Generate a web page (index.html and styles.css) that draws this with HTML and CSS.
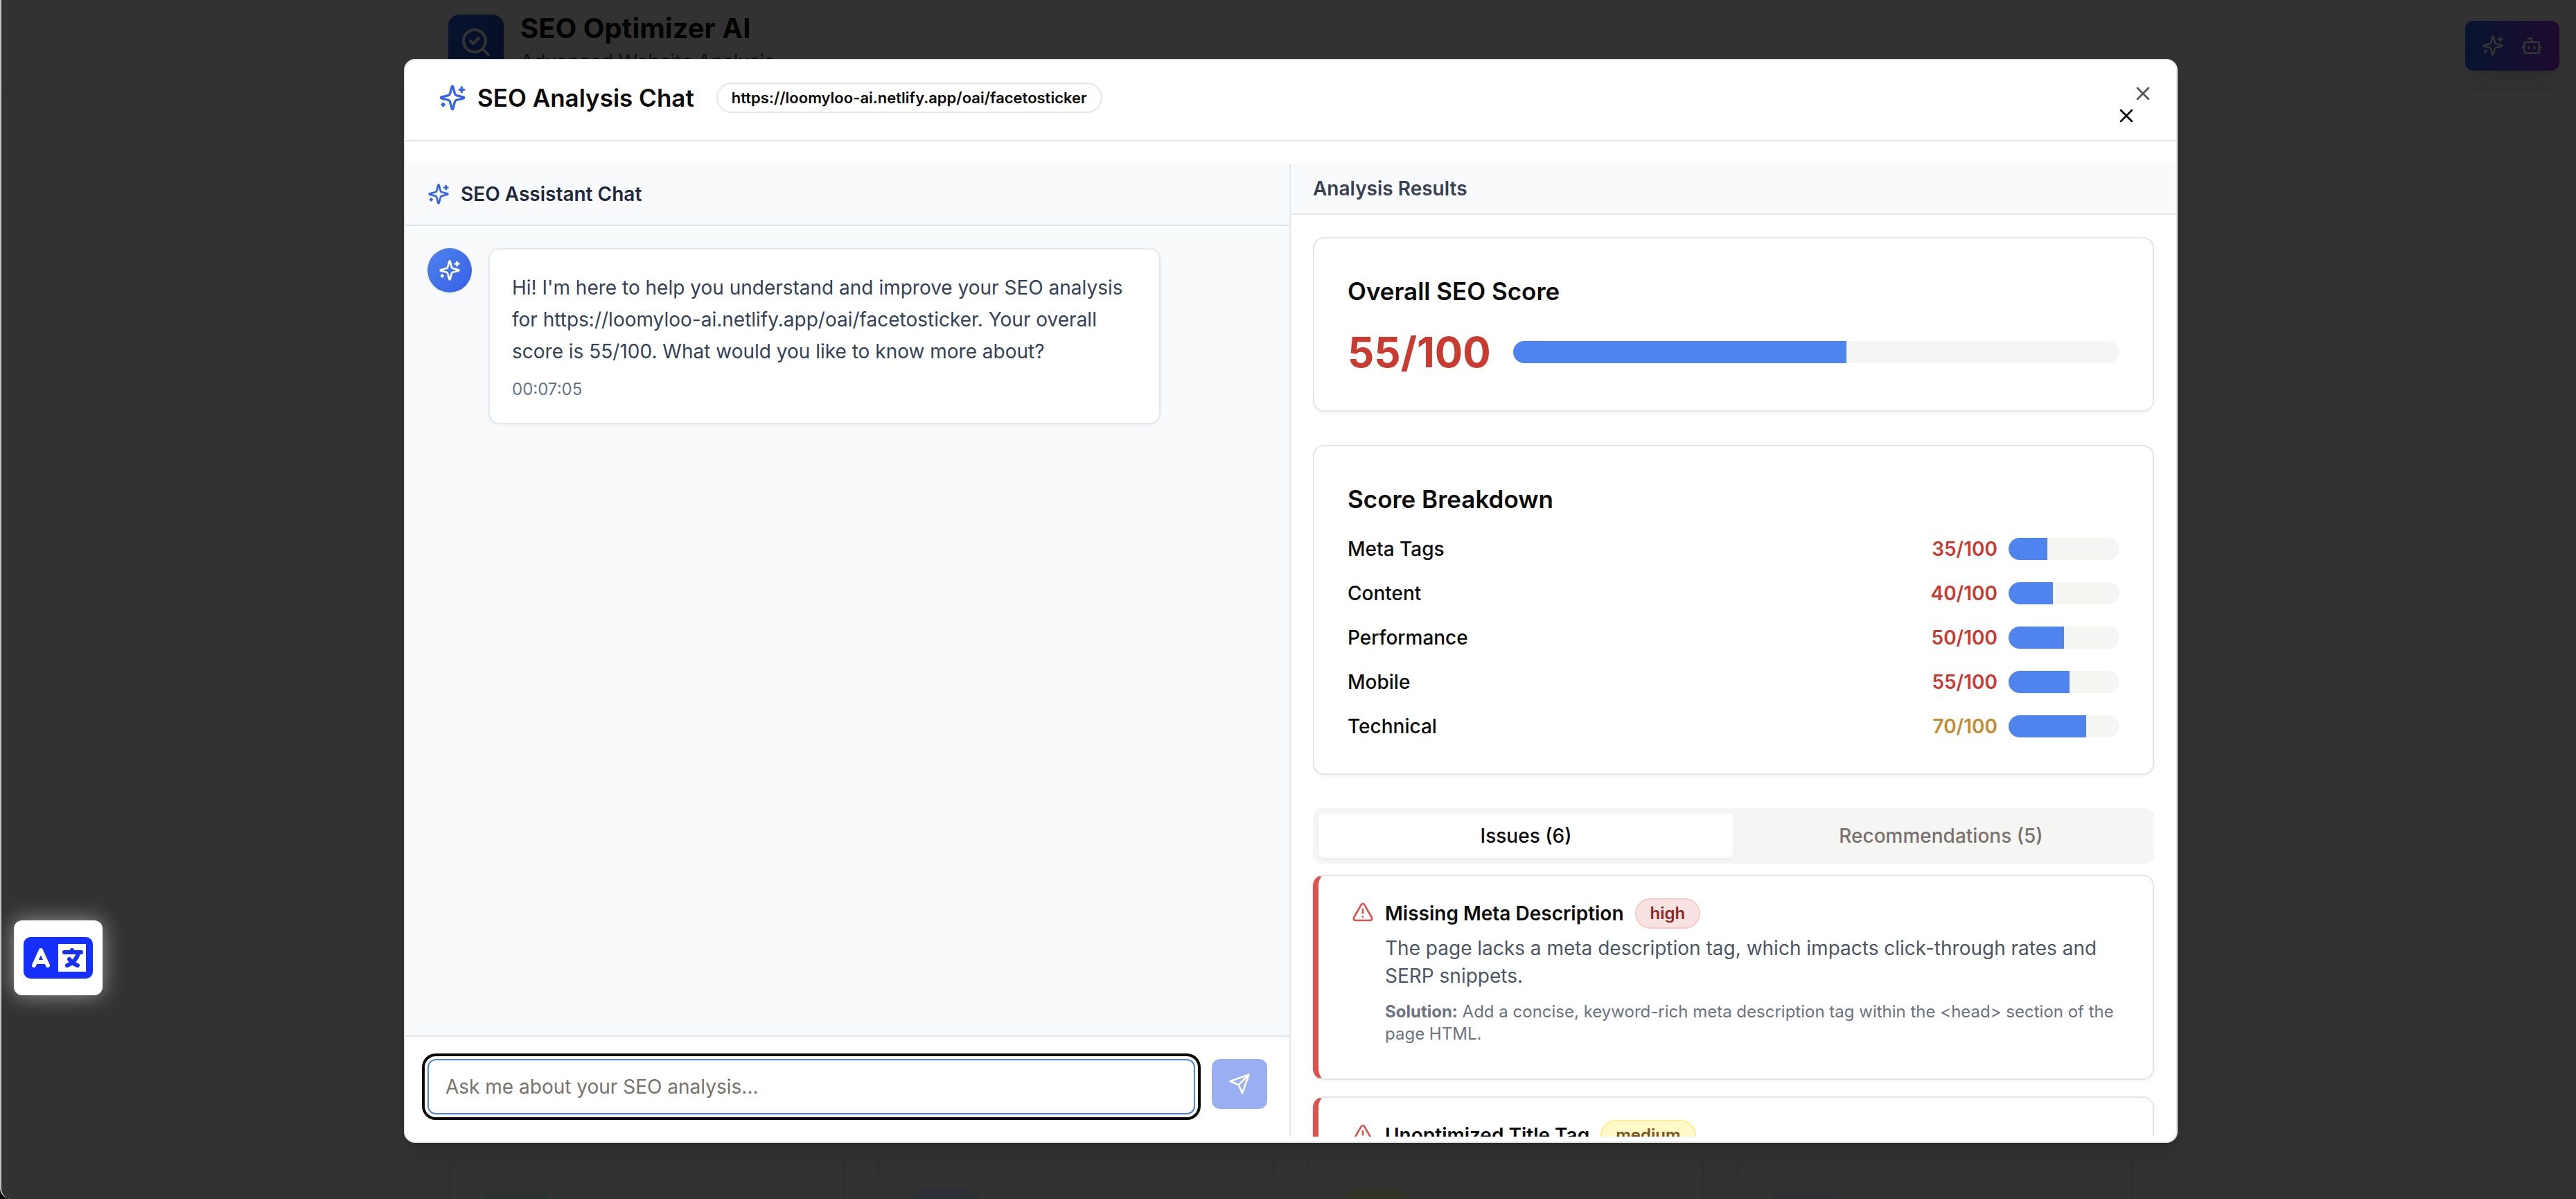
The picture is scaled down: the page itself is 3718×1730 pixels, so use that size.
FILE: index.html
```html
<!DOCTYPE html>
<html lang="en">
<head>
<meta charset="utf-8">
<title>SEO Optimizer AI</title>
<link rel="stylesheet" href="styles.css">
</head>
<body>
<svg class="symbols" aria-hidden="true">
  <symbol id="sparkles" viewBox="0 0 24 24">
    <path d="M9.937 15.5A2 2 0 0 0 8.5 14.063l-6.135-1.582a.5.5 0 0 1 0-.962L8.5 9.936A2 2 0 0 0 9.937 8.5l1.582-6.135a.5.5 0 0 1 .963 0L14.063 8.5A2 2 0 0 0 15.5 9.937l6.135 1.581a.5.5 0 0 1 0 .964L15.5 14.063a2 2 0 0 0-1.437 1.437l-1.582 6.135a.5.5 0 0 1-.963 0z"/>
    <path d="M20 3v4M22 5h-4M4 17v2M5 18H3"/>
  </symbol>
  <symbol id="bot" viewBox="0 0 24 24">
    <path d="M12 8V4H8M2 14h2M20 14h2M15 13v2M9 13v2"/>
    <rect width="16" height="12" x="4" y="8" rx="2"/>
  </symbol>
  <symbol id="search-check" viewBox="0 0 24 24">
    <path d="m8 11 2 2 4-4"/><circle cx="11" cy="11" r="8"/><path d="m21 21-4.3-4.3"/>
  </symbol>
  <symbol id="close" viewBox="0 0 24 24"><path d="M18 6 6 18M6 6l12 12"/></symbol>
  <symbol id="send" viewBox="0 0 24 24"><path d="m22 2-7 20-4-9-9-4Z"/><path d="M22 2 11 13"/></symbol>
  <symbol id="alert" viewBox="0 0 24 24">
    <path d="m21.73 18-8-14a2 2 0 0 0-3.48 0l-8 14A2 2 0 0 0 4 21h16a2 2 0 0 0 1.73-3Z"/><path d="M12 9v4M12 17h.01"/>
  </symbol>
</svg>

<div class="window">
  <div class="page">
    <header class="site-header">
      <div class="container brand">
        <span class="logo"><svg class="icon icon-lg"><use href="#search-check"/></svg></span>
        <div>
          <h1 class="brand-name">SEO Optimizer AI</h1>
          <p class="brand-tagline">Advanced Website Analysis</p>
        </div>
      </div>
    </header>
    <button class="assistant-button" type="button" aria-label="Open assistant">
      <svg class="icon"><use href="#sparkles"/></svg>
      <svg class="icon"><use href="#bot"/></svg>
    </button>
    <div class="feature-section">
      <div class="container features">
        <div class="feature"><span class="feature-icon green"></span></div>
        <div class="feature"><span class="feature-icon blue"></span></div>
        <div class="feature"><span class="feature-icon yellow"></span></div>
        <div class="feature"><span class="feature-icon purple"></span></div>
      </div>
    </div>
  </div>

  <div class="overlay">
    <div class="dialog" role="dialog" aria-labelledby="dialog-title">
      <header class="dialog-header">
        <h2 class="dialog-title" id="dialog-title"><svg class="icon icon-md accent"><use href="#sparkles"/></svg>SEO Analysis Chat</h2>
        <span class="badge url">https://loomyloo-ai.netlify.app/oai/facetosticker</span>
        <button class="header-close" type="button" aria-label="Close chat"><svg class="icon"><use href="#close"/></svg></button>
      </header>
      <button class="dialog-close" type="button" aria-label="Close"><svg class="icon"><use href="#close"/></svg></button>

      <div class="panes">
        <section class="chat">
          <h3 class="chat-header"><svg class="icon accent"><use href="#sparkles"/></svg>SEO Assistant Chat</h3>
          <div class="messages">
            <span class="avatar"><svg class="icon"><use href="#sparkles"/></svg></span>
            <div class="bubble">
              <p class="message">Hi! I'm here to help you understand and improve your SEO analysis for https://loomyloo-ai.netlify.app/oai/facetosticker. Your overall score is 55/100. What would you like to know more about?</p>
              <time class="time">00:07:05</time>
            </div>
          </div>
          <form class="composer">
            <input class="composer-input" type="text" aria-label="Message" placeholder="Ask me about your SEO analysis...">
            <button class="send" type="button" aria-label="Send"><svg class="icon"><use href="#send"/></svg></button>
          </form>
        </section>

        <section class="results">
          <h3 class="results-header">Analysis Results</h3>
          <div class="results-body">
            <div class="card">
              <h4 class="card-title">Overall SEO Score</h4>
              <div class="overall">
                <span class="overall-score">55/100</span>
                <div class="bar"><div class="bar-fill" style="width:55%"></div></div>
              </div>
            </div>

            <div class="card">
              <h4 class="card-title">Score Breakdown</h4>
              <ul class="breakdown">
                <li class="metric"><span class="metric-name">Meta Tags</span><span class="metric-score">35/100</span><div class="bar small"><div class="bar-fill" style="width:35%"></div></div></li>
                <li class="metric"><span class="metric-name">Content</span><span class="metric-score">40/100</span><div class="bar small"><div class="bar-fill" style="width:40%"></div></div></li>
                <li class="metric"><span class="metric-name">Performance</span><span class="metric-score">50/100</span><div class="bar small"><div class="bar-fill" style="width:50%"></div></div></li>
                <li class="metric"><span class="metric-name">Mobile</span><span class="metric-score">55/100</span><div class="bar small"><div class="bar-fill" style="width:55%"></div></div></li>
                <li class="metric"><span class="metric-name">Technical</span><span class="metric-score fair">70/100</span><div class="bar small"><div class="bar-fill" style="width:70%"></div></div></li>
              </ul>
            </div>

            <div>
              <div class="tabs" role="tablist">
                <button class="tab active" type="button" role="tab" aria-selected="true">Issues (6)</button>
                <button class="tab" type="button" role="tab" aria-selected="false">Recommendations (5)</button>
              </div>
              <div class="issues">
                <article class="issue">
                  <svg class="icon issue-icon"><use href="#alert"/></svg>
                  <div>
                    <div class="issue-heading"><h5 class="issue-title">Missing Meta Description</h5><span class="badge high">high</span></div>
                    <p class="issue-text">The page lacks a meta description tag, which impacts click-through rates and SERP snippets.</p>
                    <p class="issue-solution"><strong>Solution:</strong> Add a concise, keyword-rich meta description tag within the &lt;head&gt; section of the page HTML.</p>
                  </div>
                </article>
                <article class="issue">
                  <svg class="icon issue-icon"><use href="#alert"/></svg>
                  <div>
                    <div class="issue-heading"><h5 class="issue-title">Unoptimized Title Tag</h5><span class="badge medium">medium</span></div>
                  </div>
                </article>
              </div>
            </div>
          </div>
        </section>
      </div>
    </div>
  </div>

  <button class="translate" type="button" aria-label="Translate">
    <svg width="100" height="60" viewBox="0 0 100 60">
      <rect width="100" height="60" rx="10" fill="#1430fa"/>
      <rect x="50" y="10" width="40" height="40" fill="#fff"/>
      <g fill="none" stroke-width="6" stroke-linecap="round" stroke-linejoin="round">
        <path stroke="#fff" d="M15 41 25 19 35 41M19 36H31"/>
        <path stroke="#1430fa" d="M59 22H83M70 19V21M79 24Q75 36 63 41M66 32Q70 38 78 41"/>
      </g>
    </svg>
  </button>
</div>
</body>
</html>
```
FILE: styles.css
```css
*, *::before, *::after { box-sizing: border-box; }

body {
  margin: 0;
  background: #0a0a0a;
  color: #0c0a09;
  font: 400 28px/40px Inter, "Liberation Sans", sans-serif;
}

h1, h2, h3, h4, h5, p, ul { margin: 0; padding: 0; }
ul { list-style: none; }
button, input { font: inherit; color: inherit; }
button { border: 0; padding: 0; background: none; cursor: pointer; }

.symbols { position: absolute; width: 0; height: 0; }

.icon {
  flex: none;
  display: block;
  width: 32px;
  height: 32px;
  fill: none;
  stroke: currentColor;
  stroke-width: 2;
  stroke-linecap: round;
  stroke-linejoin: round;
}
.icon-md { width: 40px; height: 40px; }
.icon-lg { width: 48px; height: 48px; }
.accent { color: #3563e9; }

.window {
  position: relative;
  height: 100vh;
  overflow: hidden;
  border-left: 2px solid #c6c6c6;
  border-bottom-left-radius: 16px;
}

/* Page behind the dialog */
.page {
  height: 100%;
  display: flex;
  flex-direction: column;
  justify-content: space-between;
  background: #fafafa;
}
.container {
  width: 100%;
  max-width: 2432px;
  margin: 0 auto;
}
.site-header {
  padding: 13px 0 17px 6px;
  border-bottom: 2px solid #e7e5e4;
}
.brand { display: flex; align-items: center; gap: 24px; }
.logo {
  display: grid;
  place-items: center;
  width: 80px;
  height: 80px;
  border-radius: 16px;
  background: linear-gradient(135deg, #2563eb, #1e40af);
  color: #fff;
}
.brand-name { font-size: 40px; line-height: 56px; font-weight: 700; }
.brand-tagline { color: #57534e; }
.assistant-button {
  position: absolute;
  top: 30px;
  right: 24px;
  display: flex;
  gap: 24px;
  padding: 20px 24px;
  border-radius: 12px;
  background: linear-gradient(90deg, #2563eb, #9333ea);
  box-shadow: 0 20px 30px -6px rgba(0, 0, 0, .1), 0 8px 12px -8px rgba(0, 0, 0, .1);
  color: #fff;
}
.feature-section { height: 64px; padding-left: 6px; }
.features {
  display: grid;
  grid-template-columns: repeat(4, 1fr);
  gap: 48px;
}
.feature {
  height: 320px;
  padding: 48px;
  border: 2px solid #e7e5e4;
  border-radius: 16px;
}
.feature-icon { display: block; width: 96px; height: 96px; border-radius: 16px; }
.green { background: #dcfce7; }
.blue { background: #dbeafe; }
.yellow { background: #fef9c3; }
.purple { background: #f3e8ff; }

/* Dialog */
.overlay {
  position: absolute;
  inset: 0;
  display: flex;
  justify-content: center;
  padding: 85px 0 81px 6px;
  background: rgba(0, 0, 0, .8);
}
.dialog {
  position: relative;
  display: flex;
  flex-direction: column;
  width: 100%;
  max-width: 2560px;
  padding-bottom: 7px;
  border: 2px solid #e7e5e4;
  border-radius: 16px;
  background: #fff;
  box-shadow: 0 20px 30px -6px rgba(0, 0, 0, .1), 0 8px 12px -8px rgba(0, 0, 0, .1);
}
.dialog-header {
  display: flex;
  align-items: flex-start;
  gap: 32px;
  padding: 32px 48px 11px;
  border-bottom: 2px solid #e5e5e5;
}
.dialog-title {
  display: flex;
  align-items: center;
  gap: 16px;
  font-size: 35px;
  line-height: 44px;
  font-weight: 600;
}
.badge {
  flex: none;
  padding: 4px 20px;
  border: 2px solid #e5e5e5;
  border-radius: 22px;
  font-size: 24px;
  line-height: 32px;
  font-weight: 600;
}
.url { font-size: 22px; }
.header-close {
  display: grid;
  place-items: center;
  width: 48px;
  height: 48px;
  margin: 24px 0 0 auto;
}
.dialog-close { position: absolute; top: 32px; right: 32px; opacity: .7; }

.panes {
  flex: 1;
  min-height: 0;
  display: grid;
  grid-template-columns: 1fr 1fr;
  grid-template-rows: minmax(0, 1fr);
  margin-top: 32px;
}

/* Chat */
.chat {
  display: flex;
  flex-direction: column;
  border-right: 2px solid #e2e8f0;
  background: #f8fafc;
}
.chat-header {
  display: flex;
  align-items: center;
  gap: 16px;
  padding: 24px 32px;
  border-bottom: 2px solid #e2e8f0;
  color: #1e293b;
  font-size: 28px;
  font-weight: 600;
}
.messages {
  flex: 1;
  display: flex;
  align-items: flex-start;
  gap: 24px;
  padding: 32px;
}
.avatar {
  flex: none;
  display: grid;
  place-items: center;
  width: 64px;
  height: 64px;
  border-radius: 50%;
  background: linear-gradient(135deg, #4f83ee, #3560e4);
  box-shadow: 0 2px 4px rgba(0, 0, 0, .06);
  color: #fff;
}
.bubble {
  width: 80%;
  padding: 32px;
  border: 2px solid #e2e8f0;
  border-radius: 16px;
  background: #fff;
  box-shadow: 0 2px 4px rgba(0, 0, 0, .05);
}
.message { color: #334155; line-height: 46px; }
.time {
  display: block;
  margin-top: 16px;
  color: #64748b;
  font-size: 24px;
  line-height: 32px;
}
.composer {
  display: flex;
  align-items: flex-start;
  gap: 24px;
  padding: 32px;
  border-top: 2px solid #e2e8f0;
  background: #fff;
}
.composer-input {
  flex: 1;
  min-width: 0;
  height: 80px;
  padding: 0 24px;
  border: 2px solid #4f83ee;
  border-radius: 12px;
  outline: 0;
  background: #fff;
  box-shadow: 0 0 0 4px #fff, 0 0 0 8px #0c0a09;
}
.composer-input::placeholder { color: #78716c; opacity: 1; }
.send {
  display: grid;
  place-items: center;
  width: 80px;
  height: 72px;
  border-radius: 12px;
  background: #9aaff1;
  color: #fff;
}

/* Results */
.results { display: flex; flex-direction: column; min-height: 0; }
.results-header {
  padding: 16px 32px;
  border-bottom: 2px solid #e5e5e5;
  background: #f9fafb;
  color: #374151;
  font-size: 28px;
  font-weight: 600;
}
.results-body {
  flex: 1;
  min-height: 0;
  overflow: hidden;
  display: flex;
  flex-direction: column;
  gap: 48px;
  padding: 32px 32px 0;
}
.card {
  padding: 48px;
  border: 2px solid #e5e5e5;
  border-radius: 16px;
  box-shadow: 0 2px 4px rgba(0, 0, 0, .05);
}
.card-title {
  margin-bottom: 24px;
  font-size: 35px;
  line-height: 56px;
  font-weight: 600;
}
.overall { display: flex; align-items: center; gap: 32px; }
.overall-score {
  color: #c93a31;
  font-size: 60px;
  line-height: 72px;
  font-weight: 700;
}
.bar {
  flex: 1;
  height: 32px;
  overflow: hidden;
  border-radius: 16px;
  background: #f5f5f4;
}
.bar.small { flex: none; width: 160px; }
.bar-fill { height: 100%; background: #4f83ee; }
.breakdown { display: grid; gap: 24px; }
.metric { display: flex; align-items: center; gap: 16px; }
.metric-name { flex: 1; font-weight: 500; }
.metric-score { color: #c93a31; font-weight: 600; }
.metric-score.fair { color: #c08c30; }

.tabs {
  display: grid;
  grid-template-columns: 1fr 1fr;
  padding: 8px;
  border-radius: 12px;
  background: #f5f5f4;
}
.tab {
  padding: 12px;
  border-radius: 8px;
  color: #78716c;
  font-weight: 500;
}
.tab.active {
  background: #fff;
  box-shadow: 0 2px 4px rgba(0, 0, 0, .05);
  color: #0c0a09;
}
.issues { display: grid; gap: 24px; margin-top: 16px; }
.issue {
  display: flex;
  align-items: flex-start;
  gap: 16px;
  padding: 32px 48px 48px;
  border: 2px solid #e5e5e5;
  border-left: 8px solid #df514c;
  border-radius: 16px;
  box-shadow: 0 2px 4px rgba(0, 0, 0, .05);
}
.issue-icon { margin-top: 4px; color: #df514c; }
.issue-heading { display: flex; align-items: center; gap: 16px; }
.issue-title { font-size: 28px; font-weight: 600; }
.high { border-color: #f6caca; background: #f9e2e2; color: #8d2822; }
.medium { border-color: #fbee90; background: #fef9c8; color: #7d4f1b; }
.issue-text { margin-top: 8px; color: #4b5563; }
.issue-solution {
  margin-top: 16px;
  color: #6b7280;
  font-size: 24px;
  line-height: 32px;
}
.issue-solution strong { font-weight: 700; }

/* Floating translate control */
.translate {
  position: absolute;
  left: 18px;
  bottom: 294px;
  display: grid;
  place-items: center;
  width: 128px;
  height: 108px;
  border-radius: 12px;
  background: #fff;
  box-shadow: 0 0 30px rgba(255, 255, 255, .5);
}
```
